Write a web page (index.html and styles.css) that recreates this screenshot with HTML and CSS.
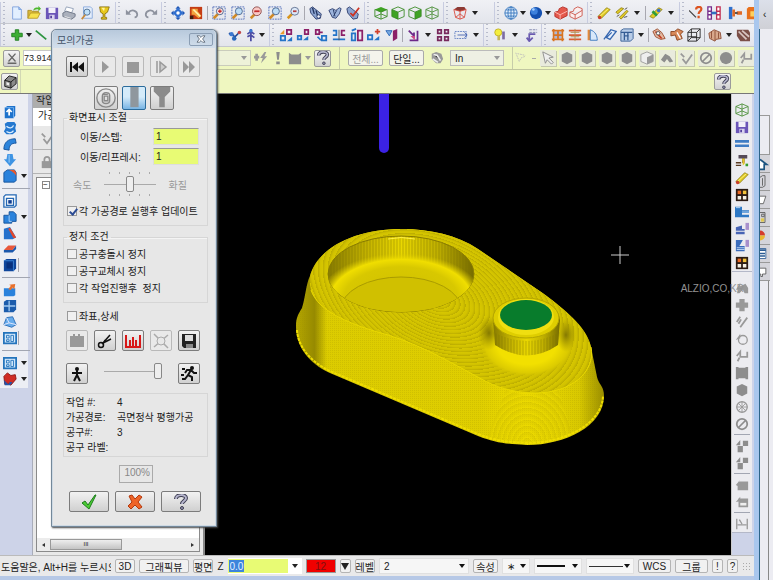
FILE: index.html
```html
<!DOCTYPE html>
<html lang="ko">
<head>
  <meta charset="UTF-8">
  <title>모의가공</title>
  <link rel="stylesheet" href="styles.css">
</head>
<body>

<!-- icon set -->
<svg class="sprite" aria-hidden="true">
  <symbol id="new" viewBox="0 0 16 16"><path d="M3 1h7l3 3v11H3z" fill="#e2efff" stroke="#7da0dc"/><path d="M10 1v3h3" fill="#9cc0f2" stroke="#7da0dc"/></symbol>
  <symbol id="open" viewBox="0 0 16 16"><path d="M1 14V5h4l1 1h7v3" fill="#d9b83c" stroke="#a98a20"/><path d="M1 14l3-6h11l-3 6z" fill="#f6e04c" stroke="#b99a26"/><path d="M7 5c1-3 3-4 6-3V0l3 3-3 3V4c-2-1-4 0-6 1z" fill="#4cb82c"/></symbol>
  <symbol id="save" viewBox="0 0 16 16"><path d="M1 2h14v13H1z" fill="#6b55b8"/><path d="M4 2h8v6H4z" fill="#f2f0fa"/><path d="M5 10h6v5H5z" fill="#d8d2ee"/><path d="M6 11h2v3H6z" fill="#54409c"/></symbol>
  <symbol id="print" viewBox="0 0 16 16"><path d="M5 1l8 2-2 5-8-2z" fill="#fff" stroke="#8d9bb4"/><path d="M1 8l4-2 10 3v3l-4 3-10-3z" fill="#aab0bc" stroke="#6c7484"/><path d="M3 12l7 2" stroke="#eee"/></symbol>
  <symbol id="preview" viewBox="0 0 16 16"><path d="M4 1h8l2 2v11H4z" fill="#e4eefc" stroke="#86a8dc"/><circle cx="8" cy="7" r="3.5" fill="#bfe0f8" stroke="#48688c"/><path d="M6 10l-4 5" stroke="#c78a3a" stroke-width="2"/></symbol>
  <symbol id="cup" viewBox="0 0 16 16"><path d="M3 1h11l-2 6-3 2v4h2v2H5v-2h2V9L4 7z" fill="#e8c81c" stroke="#8c7410"/><path d="M5 2h4L8 6z" fill="#fff3a0"/></symbol>
  <symbol id="undo" viewBox="0 0 16 16"><path d="M4 8c3-5 10-3 10 2 0 1-1 3-3 3" fill="none" stroke="#8d929e" stroke-width="2"/><path d="M1 4v6h6z" fill="#8d929e"/></symbol>
  <symbol id="redo" viewBox="0 0 16 16"><path d="M12 8C9 3 2 5 2 10c0 1 1 3 3 3" fill="none" stroke="#8d929e" stroke-width="2"/><path d="M15 4v6H9z" fill="#8d929e"/></symbol>
  <symbol id="pan" viewBox="0 0 16 16"><path d="M8 0l3 3H5zM8 16l3-3H5zM0 8l3-3v6zM16 8l-3-3v6z" fill="#1f56b4"/><path d="M8 2l6 6-6 6-6-6z" fill="#2f6fd0"/><circle cx="8" cy="8" r="2" fill="#fff"/></symbol>
  <symbol id="exit" viewBox="0 0 16 16"><path d="M1 1h14v14H1z" fill="#c43c14"/><path d="M3 3h7v3l4 5-3 3-5-4H3z" fill="#f2a43c"/><path d="M5 4l8 8" stroke="#fff3b0" stroke-width="2"/><path d="M1 11h4v4H1z" fill="#3c2010"/></symbol>
  <symbol id="zwin" viewBox="0 0 16 16"><path d="M1 1h14v14H1z" fill="none" stroke="#4a68b8" stroke-dasharray="2 1"/><path d="M7 9l-5 5" stroke="#d08a28" stroke-width="3"/><circle cx="9" cy="6" r="4" fill="#f4e0e0" stroke="#44608c"/><path d="M7 6h4M9 4v4" stroke="#c42a2a" stroke-width="1.5"/></symbol>
  <symbol id="zsel" viewBox="0 0 16 16"><path d="M1 1h14v14H1z" fill="none" stroke="#4a68b8" stroke-dasharray="2 1"/><path d="M7 9l-5 5" stroke="#d08a28" stroke-width="3"/><circle cx="9" cy="6" r="4" fill="#bcdcf6" stroke="#44608c"/></symbol>
  <symbol id="zout" viewBox="0 0 16 16"><path d="M7 9l-5 5" stroke="#d08a28" stroke-width="3"/><circle cx="9" cy="6" r="5" fill="#f8c8c4" stroke="#8a4444"/><path d="M6 6h6" stroke="#c42a2a" stroke-width="2"/></symbol>
  <symbol id="zin" viewBox="0 0 16 16"><path d="M7 9l-5 5" stroke="#d8941c" stroke-width="3"/><circle cx="10" cy="6" r="4.5" fill="#dce8f8" stroke="#5c6c8c"/><path d="M8 6h4" stroke="#b43c3c" stroke-width="2"/></symbol>
  <symbol id="screw" viewBox="0 0 16 16"><path d="M1 3l3-2 10 8-1 5-5 1-6-7z" fill="#8ca4d0" stroke="#2c3c6c"/><path d="M4 2l2 7M8 5l2 7" stroke="#22345f" stroke-width="1.5"/><circle cx="11" cy="12" r="2" fill="#f0f4fc" stroke="#2c3c6c"/></symbol>
  <symbol id="screw2" viewBox="0 0 16 16"><path d="M1 5l4-2 4 2 4-3 2 1-2 6-4 5-4-1z" fill="#9cb4dc" stroke="#2c3c6c"/><path d="M6 4l2 8M10 5l-4 7" stroke="#22345f"/></symbol>
  <symbol id="screw3" viewBox="0 0 16 16"><path d="M1 3l3-2 10 8-1 5-5 1-6-7z" fill="#8ca4d0" stroke="#2c3c6c"/><path d="M5 8l3 3 7-9" fill="none" stroke="#cc3424" stroke-width="2"/></symbol>
  <symbol id="cubetop" viewBox="0 0 16 16"><path d="M1 4l7-3 7 3-7 3z" fill="#3fa324"/><path d="M1 4v8l7 3 7-3V4M8 7v8M1 4l7 3 7-3M1 12l7-3 7 3" fill="none" stroke="#3a8a26"/></symbol>
  <symbol id="cubefront" viewBox="0 0 16 16"><path d="M1 4l7 3v8l-7-3z" fill="#3fa324"/><path d="M1 4l7-3 7 3v8l-7 3-7-3zM1 4l7 3 7-3M8 7v8" fill="none" stroke="#3a8a26"/></symbol>
  <symbol id="cuberight" viewBox="0 0 16 16"><path d="M15 4L8 7v8l7-3z" fill="#3fa324"/><path d="M1 4l7-3 7 3v8l-7 3-7-3zM1 4l7 3 7-3M8 7v8" fill="none" stroke="#3a8a26"/></symbol>
  <symbol id="cubewire" viewBox="0 0 16 16"><path d="M1 4l7-3 7 3v8l-7 3-7-3zM1 4l7 3 7-3M8 1v14M1 12l7-3 7 3" fill="none" stroke="#4b8f38"/></symbol>
  <symbol id="cubered" viewBox="0 0 16 16"><path d="M1 4l4-3h8l2 3-7 2z" fill="#8c3a34"/><path d="M1 4l2 9 5 2 5-2 2-9-7 2zM8 6v9M3 13l5-4 5 4" fill="none" stroke="#d8483c"/></symbol>
  <symbol id="globe" viewBox="0 0 16 16"><circle cx="8" cy="8" r="7" fill="#e2effc" stroke="#3474bc"/><path d="M1 8h14M8 1v14M2 4.500h12M2 11.500h12" stroke="#3474bc"/><ellipse cx="8" cy="8" rx="3.500" ry="7" fill="none" stroke="#3474bc"/></symbol>
  <symbol id="sphere" viewBox="0 0 16 16"><circle cx="8" cy="8" r="7" fill="#1450b0"/><circle cx="6" cy="6" r="4" fill="#3c80dc"/><circle cx="5" cy="4" r="1.500" fill="#a8d0ff"/></symbol>
  <symbol id="solid" viewBox="0 0 16 16"><path d="M1 7l4-1 1-3 4-2 5 2v8l-8 4-6-3z" fill="#e4584c" stroke="#b42c24"/><path d="M1 7l6 3 8-4M7 10v5" stroke="#ffc0b8" fill="none"/></symbol>
  <symbol id="wire" viewBox="0 0 16 16"><path d="M1 7l4-1 1-3 4-2 5 2v8l-8 4-6-3zM1 7l6 3 8-5M7 10v5" fill="#fbeeee" stroke="#cc5448"/></symbol>
  <symbol id="pencil" viewBox="0 0 16 16"><path d="M1 12L11 2l4 2L5 14z" fill="#e2cc24" stroke="#94821a"/><path d="M3 12L13 3" stroke="#fff48c"/><circle cx="3" cy="13" r="2" fill="#c8402c"/></symbol>
  <symbol id="pencils" viewBox="0 0 16 16"><path d="M1 7l6-5 3 1-7 6zM5 13l8-8 2 1-8 9z" fill="#e2cc24" stroke="#94821a"/><path d="M2 12l3-2M10 13l4-1M11 4l3-2" stroke="#444"/></symbol>
  <symbol id="pencilg" viewBox="0 0 16 16"><path d="M1 12L11 2l4 2L5 14z" fill="#e2cc24" stroke="#94821a"/><path d="M4 6l5 5" stroke="#2e9c3c" stroke-width="3"/><circle cx="11" cy="5" r="2" fill="#3470cc"/></symbol>
  <symbol id="ask" viewBox="0 0 16 16"><path d="M0 5l8 8" stroke="#444" stroke-width="1.500"/><path d="M8 4c0-4 7-4 6 0 0 2-3 2-3 5M11 11v3" fill="none" stroke="#dc5420" stroke-width="2.500"/></symbol>
  <symbol id="chain" viewBox="0 0 16 16"><path d="M1 1h4v14H1zM1 6h4M1 10h4" fill="#fff" stroke="#742c8c" stroke-width="1.500"/><path d="M11 1h4v14h-4zM11 6h4M11 10h4" fill="#fff" stroke="#c02c50" stroke-width="1.500"/><path d="M5 8h6" stroke="#3070c0" stroke-width="3"/></symbol>
  <symbol id="link" viewBox="0 0 16 16"><path d="M1 1h4v14H1z" fill="#3070cc"/><path d="M5 4h3v8H5zM10 6h6v4h-6z" fill="#e06a28"/><path d="M8 8h3" stroke="#444" stroke-width="2"/></symbol>
  <symbol id="orange" viewBox="0 0 16 16"><path d="M1 3l2-2h12v14H1z" fill="#e8701c"/><path d="M5 6h8v6H5z" fill="#fbd060"/></symbol>
  <symbol id="plus" viewBox="0 0 16 16"><path d="M6 2h4v4h4v4h-4v4H6v-4H2V6h4z" fill="#3cae34" stroke="#1d7c1c"/></symbol>
  <symbol id="line" viewBox="0 0 16 16"><path d="M2 3l12 10" stroke="#2c9440" stroke-width="2"/></symbol>
  <symbol id="node" viewBox="0 0 16 16"><path d="M1 6l6 3M6 12l8-8M7 9l2 4" stroke="#234a94" stroke-width="2"/><circle cx="4" cy="7" r="2.500" fill="#3c78d0"/><circle cx="13" cy="5" r="2" fill="#c44848"/><circle cx="7" cy="12" r="2.500" fill="#2868bc"/></symbol>
  <symbol id="pin" viewBox="0 0 16 16"><path d="M9 1v14M5 7l4-3 4 3M5 10l4-2 4 3" fill="none" stroke="#4b4ca4" stroke-width="2"/><circle cx="9" cy="3" r="2" fill="#3c78d0"/></symbol>
  <symbol id="xf1" viewBox="0 0 16 16"><path d="M9 2h5v5H9z" fill="none" stroke="#8c2068" stroke-width="2"/><path d="M2 9h5v5H2z" fill="none" stroke="#2474c8" stroke-width="2"/><path d="M1 7l5-5v5z" fill="#ea9a2c"/><path d="M9 15l6-5v5z" fill="#2474c8"/></symbol>
  <symbol id="xf2" viewBox="0 0 16 16"><path d="M10 2h4v5h-4z" fill="none" stroke="#8c2068" stroke-width="2"/><path d="M2 9h4v4H2z" fill="none" stroke="#2474c8" stroke-width="2"/><path d="M8 14h6V9z" fill="#2474c8"/></symbol>
  <symbol id="xf3" viewBox="0 0 16 16"><path d="M2 2h4v5H2zM5 5h5" fill="none" stroke="#8c2068" stroke-width="2"/><path d="M9 9h5v5H9zM4 10l4 4" fill="none" stroke="#2474c8" stroke-width="2"/></symbol>
  <symbol id="xf4" viewBox="0 0 16 16"><path d="M1 3h4v5H1M1 13h14" fill="none" stroke="#2474c8" stroke-width="2"/><path d="M15 3h-4v5h4" fill="none" stroke="#8c2068" stroke-width="2"/><path d="M8 2v12" stroke="#555"/></symbol>
  <symbol id="xf5" viewBox="0 0 16 16"><path d="M2 6h4v8H2zM2 3l5-2" fill="none" stroke="#2474c8" stroke-width="2"/><path d="M9 3h5v11H9z" fill="none" stroke="#8c2068" stroke-width="2"/></symbol>
  <symbol id="xf6" viewBox="0 0 16 16"><path d="M1 8h5v5H1z" fill="none" stroke="#2474c8" stroke-width="2"/><path d="M12 1v6M9 4h6" stroke="#d0402c" stroke-width="2"/><path d="M8 14h6V9z" fill="#2474c8"/></symbol>
  <symbol id="xf7" viewBox="0 0 16 16"><path d="M9 3l5-2v11l-5 3z" fill="#8c2068"/><path d="M1 3h7l-3 6z" fill="#78a8e0" stroke="#2c68b8"/></symbol>
  <symbol id="xf8" viewBox="0 0 16 16"><path d="M2 3l6 6V5M3 14h9V3" fill="none" stroke="#6c2888" stroke-width="2"/><path d="M4 9h5v5z" fill="#d04888"/></symbol>
  <symbol id="grid4" viewBox="0 0 16 16"><path d="M2 2h4v4H2zM10 2h4v4h-4zM2 10h4v4H2zM10 10h4v4h-4z" fill="none" stroke="#78285c" stroke-width="2"/></symbol>
  <symbol id="stretch" viewBox="0 0 16 16"><path d="M1 4h13v8H1z" fill="none" stroke="#5c7cc0" stroke-dasharray="2 1"/><path d="M4 8h11M12 5l3 3-3 3" fill="none" stroke="#4460b0"/></symbol>
  <symbol id="bulb" viewBox="0 0 16 16"><circle cx="6" cy="5" r="4" fill="#f4ee3c" stroke="#c0b020"/><path d="M5 9h3v5H5z" fill="#c8b858"/><path d="M12 4v9" stroke="#7c6ca4" stroke-width="3"/></symbol>
  <symbol id="dim" viewBox="0 0 16 16"><path d="M6 2h9M6 5h9" stroke="#777fa8" stroke-dasharray="3 1"/><path d="M13 7H6v7M3 11l3 4 4-4" fill="none" stroke="#6a5ab0" stroke-width="2"/></symbol>
  <symbol id="s1" viewBox="0 0 16 16"><path d="M4 4h8v8H4z" fill="#a8b8dc"/><path d="M3 1v14M13 1v14M1 3h14M1 13h14M8 3v10M3 8h10" stroke="#d87424" stroke-width="2"/></symbol>
  <symbol id="s2" viewBox="0 0 16 16"><path d="M1 3h14M1 8h14M1 13h14" stroke="#d85c34" stroke-width="2"/><path d="M3 5h10M3 10h10M8 1v14" stroke="#b09050"/></symbol>
  <symbol id="s3" viewBox="0 0 16 16"><path d="M3 2v12h3V2z" fill="#e48a3c"/><path d="M6 2c6 2 8 7 8 12H6z" fill="#d8e8fa" stroke="#3474bc"/></symbol>
  <symbol id="s4" viewBox="0 0 16 16"><path d="M1 13l8-11 6 2-7 9-4-2 6-6" fill="#e8f0fc" stroke="#3868b0" stroke-width="1.500"/></symbol>
  <symbol id="s5" viewBox="0 0 16 16"><path d="M1 3l3-2h11v11l-3 3H1z" fill="#b8cce8" stroke="#345c94"/><path d="M1 5h13M5 5v9M9 5v9M5 9h5" stroke="#345c94" stroke-width="1.500"/></symbol>
  <symbol id="s6" viewBox="0 0 16 16"><path d="M1 4l5-3 5 4 4 7-5 1-6-3z" fill="#e4b8a0" stroke="#984828"/><path d="M4 4l7 8" stroke="#c43c20" stroke-width="2"/><circle cx="7" cy="6" r="2" fill="#fff" stroke="#555"/></symbol>
  <symbol id="s7" viewBox="0 0 16 16"><path d="M1 4h4l4-3 6 3-3 3 2 5-6 2-2-6-5 1z" fill="#d88858" stroke="#86401c"/><path d="M8 5l4 7" stroke="#fff" stroke-width="1.500"/></symbol>
  <symbol id="cubeblk" viewBox="0 0 16 16"><path d="M1 5l4-4h10v10l-4 4H1zM1 5h10v10M11 5l4-4M5 1v10M5 11h10M1 15l4-4M1 10h10" fill="none" stroke="#222"/></symbol>
  <symbol id="mesh" viewBox="0 0 16 16"><path d="M1 6l6-4 7 3 1 7-6 1-1 2-6-3z" fill="#d8a88c" stroke="#8c4c34"/><path d="M4 4v8M8 3v11M12 5v7" stroke="#8c4c34"/></symbol>
  <symbol id="hatch" viewBox="0 0 16 16"><path d="M1 2h13l2 3v10H5L1 9z" fill="#7c5048"/><path d="M3 4l9 9M7 3l8 7" stroke="#d8c4c0" stroke-width="2"/></symbol>
  <symbol id="g-x" viewBox="0 0 16 16"><path d="M4 3l8 9M12 3l-8 9M3 14h10" stroke="#666" stroke-width="1.500"/></symbol>
  <symbol id="g-bolt" viewBox="0 0 16 16"><path d="M3 3v8M0 7h6" stroke="#999" stroke-width="3"/><path d="M12 1L7 8h3l-2 6 7-8h-3l2-5z" fill="#999"/></symbol>
  <symbol id="g-bang" viewBox="0 0 16 16"><path d="M6 1h4L9 10H7zM6 12h4v3H6z" fill="#8d8d8d"/></symbol>
  <symbol id="g-cat" viewBox="0 0 16 16"><path d="M1 2l3 2h8l3-2v13H1z" fill="#8d8d8d"/></symbol>
  <symbol id="help" viewBox="0 0 16 16"><path d="M3 5c0-5 10-5 10-1 0 3-4 3-4 6" fill="none" stroke="#3c3c50" stroke-width="4"/><path d="M3 5c0-5 10-5 10-1 0 3-4 3-4 6" fill="none" stroke="#b4b4cc" stroke-width="2"/><circle cx="9" cy="14" r="1.500" fill="#9494b0" stroke="#3c3c50"/></symbol>
  <symbol id="g-ball" viewBox="0 0 16 16"><path d="M2 3l5-2 6 2 2 6-3 5H7L2 9z" fill="#999"/><path d="M4 4l4 1 4 6M3 9l6 4" stroke="#eee" stroke-width="2"/></symbol>
  <symbol id="g-dots" viewBox="0 0 16 16"><path d="M2 2l4 10 2-4 5-2M4 3l9 2" fill="none" stroke="#bbb" stroke-dasharray="2 1"/></symbol>
  <symbol id="g-arrow" viewBox="0 0 16 16"><path d="M2 1l12 6-5 1 5 5-2 2-5-5-2 4z" fill="#eee" stroke="#888"/></symbol>
  <symbol id="g-hex" viewBox="0 0 16 16"><path d="M8 1l6 3v8l-6 3-6-3V4z" fill="#8d8d8d"/></symbol>
  <symbol id="g-part" viewBox="0 0 16 16"><path d="M1 4l7-3 7 3v8l-7 3-7-3z" fill="#eee" stroke="#999"/><path d="M8 7l7-3v8l-7 3z" fill="#999"/></symbol>
  <symbol id="g-bend" viewBox="0 0 16 16"><path d="M1 10l5-7 5 3 4 6-4 1-3-4-3 4z" fill="#8d8d8d"/></symbol>
  <symbol id="g-check" viewBox="0 0 16 16"><path d="M2 3l4 4M4 9l4 5 7-10" fill="none" stroke="#999" stroke-width="2"/></symbol>
  <symbol id="g-no" viewBox="0 0 16 16"><circle cx="8" cy="8" r="6" fill="none" stroke="#8d8d8d" stroke-width="2"/><path d="M4 12l8-8" stroke="#8d8d8d" stroke-width="2"/></symbol>
  <symbol id="g-disc" viewBox="0 0 16 16"><circle cx="8" cy="8" r="7" fill="#8d8d8d"/></symbol>
  <symbol id="g-hook" viewBox="0 0 16 16"><path d="M2 8l4-5v6l8 0V3M3 14l2-4" fill="none" stroke="#999" stroke-width="2"/></symbol>
  <symbol id="g-curve" viewBox="0 0 16 16"><path d="M1 10l5-8v4l6-3 3 5v6h-4l-2-4-4 4H2l2-4z" fill="#999"/></symbol>
  <symbol id="g-plus" viewBox="0 0 16 16"><path d="M5 1h6v4h4v6h-4v4H5v-4H1V5h4z" fill="#999"/></symbol>
  <symbol id="g-slash" viewBox="0 0 16 16"><path d="M2 8l4-6M4 10l3-5M6 14l8-11" stroke="#999" stroke-width="2"/></symbol>
  <symbol id="g-ring" viewBox="0 0 16 16"><circle cx="9" cy="9" r="5" fill="none" stroke="#999" stroke-width="1.500"/><path d="M1 9l5-7v5z" fill="#999"/></symbol>
  <symbol id="g-block" viewBox="0 0 16 16"><path d="M1 1h3v1h8V1h3v14h-3v-1H4v1H1z" fill="#8d8d8d"/></symbol>
  <symbol id="g-globe" viewBox="0 0 16 16"><circle cx="8" cy="8" r="6" fill="none" stroke="#999" stroke-width="1.500"/><path d="M2 8h12M8 2v12M4 4l8 8M12 4l-8 8" stroke="#999"/></symbol>
  <symbol id="g-copy" viewBox="0 0 16 16"><path d="M9 2h6v6H9zM3 8h6v7H3zM1 7l5-6v6z" fill="#8d8d8d"/></symbol>
  <symbol id="g-card" viewBox="0 0 16 16"><path d="M4 4h11v10H3V9L1 8l5-6z" fill="#999"/></symbol>
  <symbol id="g-card2" viewBox="0 0 16 16"><path d="M4 4h11v10H4z" fill="#999"/><path d="M6 9h7v3H6z" fill="#eee"/><path d="M1 8l5-6v5z" fill="#999"/></symbol>
  <symbol id="g-dim" viewBox="0 0 16 16"><path d="M2 2v12M14 2v12M3 9h10M5 3l3 5" stroke="#999" stroke-width="1.500"/></symbol>
  <symbol id="g-lock" viewBox="0 0 16 16"><path d="M5 8V5c0-4 6-4 6 0v3" fill="none" stroke="#999" stroke-width="2"/><path d="M2 7h12v8H2z" fill="#999"/></symbol>
  <symbol id="cube" viewBox="0 0 16 16"><path d="M2 6l5-5 8 2v7l-6 5-7-2z" fill="#8a8a8a" stroke="#111"/><path d="M2 6l7 2 6-5M9 8v7" fill="none" stroke="#111"/><path d="M4 8l3 1v3l-3-1z" fill="#eee"/></symbol>
  <symbol id="b-up" viewBox="0 0 16 16"><path d="M2 3l3-2h9v11l-2 3H2z" fill="#1d72cc"/><path d="M2 3h10v12" fill="none" stroke="#78b4f0"/><path d="M7 12V6M4 8l3-3 3 3" fill="none" stroke="#fff" stroke-width="2"/></symbol>
  <symbol id="b-rev" viewBox="0 0 16 16"><path d="M2 3l3-2h8l2 3-1 4 1 4-4 3H4l-3-3 2-4z" fill="#2478d0"/><path d="M4 6c3 3 7 2 8-1M4 12c3 2 6 2 8-1" fill="none" stroke="#d8ecff" stroke-width="1.500"/></symbol>
  <symbol id="b-arc" viewBox="0 0 16 16"><path d="M1 14c0-8 5-12 13-12l1 5c-6 0-8 3-8 8z" fill="#2c84dc" stroke="#145098"/></symbol>
  <symbol id="b-down" viewBox="0 0 16 16"><path d="M5 1h6l1 6h3l-7 8-7-8h3z" fill="#3e94e4"/><path d="M7 2v9" stroke="#a8d4fa"/></symbol>
  <symbol id="b-box" viewBox="0 0 16 16"><path d="M1 4l4-3h8l2 3v9l-2 2H1z" fill="#2a82dc" stroke="#145098"/><path d="M7 1h6l2 3v4c-1-3-4-5-8-7z" fill="#e8582c"/></symbol>
  <symbol id="b-shell" viewBox="0 0 16 16"><path d="M1 3l2-2h12v12l-2 2H1z" fill="#fff" stroke="#2468b4" stroke-width="1.500"/><path d="M4 5h8v8H4z" fill="#fff" stroke="#2468b4" stroke-width="1.500"/><path d="M6 7h4v4H6z" fill="#0e3c90"/></symbol>
  <symbol id="b-bool" viewBox="0 0 16 16"><path d="M1 6h6V2h5l3 3v8h-5v2H1z" fill="#2a82dc" stroke="#145098"/><path d="M7 6v7h3" fill="none" stroke="#b0d8fa"/></symbol>
  <symbol id="b-cut" viewBox="0 0 16 16"><path d="M1 3l7-2 7 12-4 2H1z" fill="#2470cc"/><path d="M8 2l7 11-3 1L6 3z" fill="#e4482c"/></symbol>
  <symbol id="b-slab" viewBox="0 0 16 16"><path d="M1 9l5-5h9l-4 5z" fill="#e8583c"/><path d="M1 9h10l4-5v4l-4 4H1z" fill="#1c58ac"/></symbol>
  <symbol id="b-dark" viewBox="0 0 16 16"><path d="M1 3l3-2h11v11l-3 3H1z" fill="#0f469c"/><path d="M4 5h7v7H4z" fill="#08307c"/><path d="M1 3h11v12" fill="none" stroke="#3c80d0"/></symbol>
  <symbol id="b-add" viewBox="0 0 16 16"><path d="M1 6h13v8l-2 1H1z" fill="#2a82dc"/><path d="M6 7l3-4-2-1 7-1-1 6-2-2-2 3z" fill="#e8702c"/></symbol>
  <symbol id="b-grid" viewBox="0 0 16 16"><path d="M1 3l3-2h11v11l-3 3H1z" fill="#1c5cac"/><path d="M7 2v12M1 8h13" stroke="#a0c8f0" stroke-width="1.500"/></symbol>
  <symbol id="b-poly" viewBox="0 0 16 16"><path d="M4 3l7-1 4 9-5 3-9-3z" fill="#68acec" stroke="#2468b4"/><path d="M4 3l3 6 8 2M7 9l-6 2" fill="none" stroke="#eef"/></symbol>
  <symbol id="b-view" viewBox="0 0 16 16"><path d="M1 2h14v12H1z" fill="#cfe6fa" stroke="#2474bc" stroke-width="2"/><path d="M4 5h3v3H4zM9 5h3v7H9zM4 10h3v2H4z" fill="none" stroke="#2474bc"/></symbol>
  <symbol id="b-red" viewBox="0 0 16 16"><path d="M1 5l4-4 4 3 5-1 1 5-6 7-4-2-3 1z" fill="#d02c24" stroke="#8c1410"/><path d="M1 9l5 5 2-3 3 1-3 3H2z" fill="#2454a8"/></symbol>
  <symbol id="eq" viewBox="0 0 16 16"><path d="M0 5h16M0 10h16" stroke="#3f7cc4" stroke-width="3"/></symbol>
  <symbol id="drill" viewBox="0 0 16 16"><path d="M4 1h10v4h-3v5H8V5H4z" fill="#554a58"/><path d="M8 5h3v6l-2 2z" fill="#e4c428"/><path d="M1 10h6M1 13h6" stroke="#5a3a20" stroke-width="1.500"/><path d="M12 11h3v3h-3z" fill="#38a02c"/></symbol>
  <symbol id="win" viewBox="0 0 16 16"><path d="M1 1h14v14H1z" fill="#2c1c14"/><path d="M3 3h4v4H3z" fill="#ec6a24"/><path d="M9 3h4v4H9z" fill="#f4c43c"/><path d="M3 9h4v4H3zM9 9h4v4H9z" fill="#f6f0e4"/></symbol>
  <symbol id="steps" viewBox="0 0 16 16"><path d="M0 2h8v4h8v3H8v2h8v3H0z" fill="#2e78c4"/><path d="M1 3h5M8 8h8" stroke="#c4e0fa"/></symbol>
  <symbol id="layers" viewBox="0 0 16 16"><path d="M1 6l7-2v4h3v2H1zM1 11h10v3H1z" fill="#4864b4"/><path d="M12 1h4v8h-4z" fill="#a890cc"/></symbol>
  <symbol id="pockets" viewBox="0 0 16 16"><path d="M1 1h8L5 8h6v6H1z" fill="#3a6cbc"/><path d="M2 10h9M2 12h9" stroke="#c4dcf6"/><path d="M12 1h4v8h-4z" fill="#a890cc"/></symbol>

  <symbol id="rew" viewBox="0 0 16 16"><path d="M1 3h2v10H1zM9 3v10L3 8zM15 3v10L9 8z" fill="#111"/></symbol>
  <symbol id="play" viewBox="0 0 16 16"><path d="M5 2l7 6-7 6z" fill="#999"/></symbol>
  <symbol id="stop" viewBox="0 0 16 16"><path d="M2 3h12v11H2z" fill="#999"/></symbol>
  <symbol id="step" viewBox="0 0 16 16"><path d="M4 2v12" stroke="#999" stroke-width="1.500"/><path d="M7 3l6 5-6 5z" fill="#ccc" stroke="#999" stroke-width="1.500"/></symbol>
  <symbol id="ff" viewBox="0 0 16 16"><path d="M2 2l6 6-6 6zM8 2l6 6-6 6z" fill="#999"/></symbol>
  <symbol id="spiral" viewBox="0 0 24 24"><circle cx="12" cy="12" r="10" fill="none" stroke="#888" stroke-width="1.500"/><path d="M8 10c0-5 8-5 8-1v6c0 4-8 4-8 0zM10 10h4v5h-4zM9 8h5" fill="none" stroke="#888" stroke-width="1.500"/></symbol>
  <symbol id="shank" viewBox="0 0 24 24"><path d="M8 0h9v22H8z" fill="#8f979e"/></symbol>
  <symbol id="holder" viewBox="0 0 24 24"><path d="M3 0h18v5l-6 6v11H9V11L3 5z" fill="#8b8b8b"/></symbol>
  <symbol id="box" viewBox="0 0 16 16"><path d="M1 3h3V1h2v2h3V1h2v2h4v11H1z" fill="#999"/></symbol>
  <symbol id="cutter" viewBox="0 0 16 16"><circle cx="4" cy="12" r="2.500" fill="none" stroke="#111" stroke-width="1.500"/><path d="M5 11l8-9M6 10l8-4M6 11l2-4" stroke="#111" stroke-width="1.500"/></symbol>
  <symbol id="ruler" viewBox="0 0 16 16"><path d="M1 2v12h14V2M5 7v6M8 4v9M11 7v6" fill="none" stroke="#d81818" stroke-width="2"/></symbol>
  <symbol id="cross" viewBox="0 0 16 16"><path d="M1 1l14 14M15 2L1 14" stroke="#aaa" stroke-width="1.500"/><circle cx="8" cy="8" r="4" fill="#e8e8e8" stroke="#aaa"/></symbol>
  <symbol id="disk" viewBox="0 0 16 16"><path d="M1 1h14v14H3l-2-2z" fill="#222"/><path d="M4 2h8v6H4z" fill="#ddd"/><path d="M5 11h7v4H5z" fill="#888"/></symbol>
  <symbol id="walk" viewBox="0 0 16 16"><circle cx="8" cy="3" r="2" fill="#111"/><path d="M8 4v6M3 7h10M5 15l3-6 3 6" fill="none" stroke="#111" stroke-width="2"/></symbol>
  <symbol id="run" viewBox="0 0 16 16"><circle cx="11" cy="2" r="2" fill="#111"/><path d="M10 4L7 9l4 2v4M7 9l-3 4H1M4 7l2-3h4l3 3h3M1 3h3M0 9h3" fill="none" stroke="#111" stroke-width="2"/></symbol>
  <symbol id="ok" viewBox="0 0 16 16"><path d="M1 9l3-2 3 4 7-10h1L8 15z" fill="#4ccc34" stroke="#1d7c1c"/></symbol>
  <symbol id="cancel" viewBox="0 0 16 16"><path d="M2 2l3-1 3 4 4-4 3 2-4 5 4 5-3 2-4-4-4 4-3-3 4-4z" fill="#ee6428" stroke="#b4380c"/></symbol>
</svg>

<div class="app">
  <div class="bar bar-top">
    <div class="group">
      <button title="New"><svg><use href="#new"/></svg></button>
      <button title="Open"><svg><use href="#open"/></svg></button>
      <button title="Save"><svg><use href="#save"/></svg></button>
      <button title="Print"><svg><use href="#print"/></svg></button>
      <button title="Preview"><svg><use href="#preview"/></svg></button>
      <button title="Machine"><svg><use href="#cup"/></svg></button>
    </div>
    <div class="group">
      <button title="Undo"><svg><use href="#undo"/></svg></button>
      <button title="Redo"><svg><use href="#redo"/></svg></button>
    </div>
    <div class="group">
      <button title="Pan"><svg><use href="#pan"/></svg></button>
      <button title="Repaint"><svg><use href="#exit"/></svg></button>
      <i class="sep"></i>
      <button title="Zoom window"><svg><use href="#zwin"/></svg></button>
      <button title="Zoom target"><svg><use href="#zsel"/></svg></button>
      <button title="Unzoom"><svg><use href="#zout"/></svg></button>
      <button title="Zoom selected"><svg><use href="#zsel"/></svg></button>
      <button title="Unzoom 0.8"><svg><use href="#zin"/></svg></button>
      <i class="sep"></i>
      <button title="Rotate"><svg><use href="#screw"/></svg></button>
      <button title="Named view"><svg><use href="#screw2"/></svg></button>
      <button title="Previous view"><svg><use href="#screw3"/></svg></button>
    </div>
    <div class="group">
      <button title="Top view"><svg><use href="#cubetop"/></svg></button>
      <button title="Front view"><svg><use href="#cubefront"/></svg></button>
      <button title="Right view"><svg><use href="#cuberight"/></svg></button>
      <button title="Isometric view"><svg><use href="#cubewire"/></svg></button>
    </div>
    <div class="group group-start">
      <button title="Planes"><svg><use href="#cubered"/></svg></button>
      <button class="more" title="More planes"></button>
    </div>
    <div class="group">
      <button title="Wireframe"><svg><use href="#globe"/></svg></button>
      <button class="more" title="More wireframe"></button>
      <button title="Shaded"><svg><use href="#sphere"/></svg></button>
      <button class="more" title="More shading"></button>
      <button title="Solid"><svg><use href="#solid"/></svg></button>
      <button title="Outline"><svg><use href="#wire"/></svg></button>
    </div>
    <div class="group">
      <button title="Delete"><svg><use href="#pencil"/></svg></button>
      <button title="Delete duplicates"><svg><use href="#pencils"/></svg></button>
      <button class="more" title="More delete"></button>
      <i class="sep"></i>
      <button title="Undelete"><svg><use href="#pencilg"/></svg></button>
      <button class="more" title="More undelete"></button>
    </div>
    <div class="group group-start">
      <button title="Analyze"><svg><use href="#ask"/></svg></button>
      <button title="Chain"><svg><use href="#chain"/></svg></button>
      <i class="sep"></i>
      <button title="Link"><svg><use href="#link"/></svg></button>
      <button title="Settings"><svg><use href="#orange"/></svg></button>
    </div>
  </div>

  <div class="bar bar-draw">
    <div class="group">
      <button title="Point"><svg><use href="#plus"/></svg></button>
      <button class="more" title="More points"></button>
      <button title="Line"><svg><use href="#line"/></svg></button>
      <i class="fill"></i>
      <button title="Trim"><svg><use href="#node"/></svg></button>
      <button title="Break"><svg><use href="#pin"/></svg></button>
      <button class="more" title="More breaks"></button>
    </div>
    <div class="group">
      <button title="Translate"><svg><use href="#xf1"/></svg></button>
      <button title="Translate 3D"><svg><use href="#xf2"/></svg></button>
      <button title="Rotate"><svg><use href="#xf3"/></svg></button>
      <button title="Mirror"><svg><use href="#xf4"/></svg></button>
      <button title="Scale"><svg><use href="#xf5"/></svg></button>
      <button title="Move to origin"><svg><use href="#xf6"/></svg></button>
      <button title="Project"><svg><use href="#xf7"/></svg></button>
      <i class="sep"></i>
      <button title="Offset"><svg><use href="#xf8"/></svg></button>
      <button class="more" title="More offset"></button>
      <button title="Array"><svg><use href="#grid4"/></svg></button>
      <button title="Stretch"><svg><use href="#stretch"/></svg></button>
      <button class="more" title="More stretch"></button>
    </div>
    <div class="group">
      <button title="Light"><svg><use href="#bulb"/></svg></button>
      <button class="more" title="More light"></button>
      <button title="Dimension"><svg><use href="#dim"/></svg></button>
    </div>
    <div class="group">
      <button title="Net surface"><svg><use href="#s1"/></svg></button>
      <button title="Ruled surface"><svg><use href="#s2"/></svg></button>
      <button title="Revolved surface"><svg><use href="#s3"/></svg></button>
      <button title="Swept surface"><svg><use href="#s4"/></svg></button>
      <button title="Fence surface"><svg><use href="#s5"/></svg></button>
      <button class="more" title="More surfaces"></button>
      <i class="sep"></i>
      <button title="Trim surface"><svg><use href="#s6"/></svg></button>
      <button title="Fillet surface"><svg><use href="#s7"/></svg></button>
      <button title="Block"><svg><use href="#cubeblk"/></svg></button>
      <i class="sep"></i>
      <button title="Mesh"><svg><use href="#mesh"/></svg></button>
      <button class="more" title="More mesh"></button>
      <button title="Hatch"><svg><use href="#hatch"/></svg></button>
    </div>
  </div>

  <div class="bar bar-input">
    <div class="cell">
      <button class="key" title="X"><svg><use href="#g-x"/></svg></button>
      <input class="coord" type="text" value="73.914" aria-label="X">
      <span class="drop drop-off"><select aria-label="Z" disabled><option></option></select></span>
      <button title="Fast point"><svg><use href="#g-bolt"/></svg></button>
      <button title="Autocursor"><svg><use href="#g-bang"/></svg></button>
      <button title="Cursor mode"><svg><use href="#g-cat"/></svg></button>
      <button class="more more-off" title="Cursor list"></button>
      <button class="key" title="Help"><svg><use href="#help"/></svg></button>
    </div>
    <div class="cell cell-select">
      <button class="word word-off">전체...</button>
      <button class="word">단일...</button>
      <button title="Selection"><svg><use href="#g-ball"/></svg></button>
      <span class="drop drop-off"><select aria-label="Selection mode"><option>In</option></select></span>
    </div>
    <div class="cell cell-tools">
      <button title="Polygon"><svg><use href="#g-dots"/></svg></button>
      <i class="dash"></i>
      <button class="flat" title="Select"><svg><use href="#g-arrow"/></svg></button>
      <button class="flat" title="Body"><svg><use href="#g-hex"/></svg></button>
      <button class="flat" title="Edge"><svg><use href="#g-hex"/></svg></button>
      <button class="flat" title="Face"><svg><use href="#g-hex"/></svg></button>
      <button class="flat" title="Solid"><svg><use href="#g-hex"/></svg></button>
      <button class="flat" title="Part"><svg><use href="#g-part"/></svg></button>
      <button class="flat" title="Back"><svg><use href="#g-bend"/></svg></button>
      <button class="flat" title="Verify"><svg><use href="#g-check"/></svg></button>
      <button class="flat" title="None"><svg><use href="#g-no"/></svg></button>
      <button class="flat" title="End"><svg><use href="#g-disc"/></svg></button>
      <button class="flat" title="Last"><svg><use href="#g-hook"/></svg></button>
    </div>
  </div>

  <div class="bar bar-ribbon">
    <button class="key" title="Model"><svg><use href="#cube"/></svg></button>
    <i class="sep"></i>
    <i class="fill"></i>
    <button class="key" title="Help"><svg><use href="#help"/></svg></button>
  </div>

  <div class="main">
    <div class="side side-left">
      <div class="pair"><button title="Extrude"><svg><use href="#b-up"/></svg></button></div>
      <div class="pair"><button title="Revolve"><svg><use href="#b-rev"/></svg></button></div>
      <div class="pair"><button title="Sweep"><svg><use href="#b-arc"/></svg></button></div>
      <div class="pair"><button title="Loft"><svg><use href="#b-down"/></svg></button></div>
      <div class="pair"><button title="Fillet"><svg><use href="#b-box"/></svg></button><button class="more" title="More fillet"></button></div>
      <hr>
      <div class="pair"><button title="Shell"><svg><use href="#b-shell"/></svg></button></div>
      <div class="pair"><button title="Boolean"><svg><use href="#b-bool"/></svg></button><button class="more" title="More boolean"></button></div>
      <div class="pair"><button title="Draft"><svg><use href="#b-cut"/></svg></button></div>
      <div class="pair"><button title="Trim"><svg><use href="#b-slab"/></svg></button></div>
      <div class="pair"><button title="Thicken"><svg><use href="#b-dark"/></svg></button><i class="sep"></i></div>
      <hr>
      <div class="pair"><button title="Find"><svg><use href="#b-add"/></svg></button></div>
      <div class="pair"><button title="Pattern"><svg><use href="#b-grid"/></svg></button></div>
      <div class="pair"><button title="Surface"><svg><use href="#b-poly"/></svg></button></div>
      <div class="pair"><button title="Layout"><svg><use href="#b-view"/></svg></button><i class="sep"></i></div>
      <hr>
      <div class="pair"><button title="Drafting"><svg><use href="#b-view"/></svg></button><button class="more" title="More drafting"></button></div>
      <div class="pair"><button title="Solid edit"><svg><use href="#b-red"/></svg></button><button class="more" title="More solid edit"></button></div>
    </div>

    <div class="manager">
      <h2>작업</h2>
      <div class="tab">가공</div>
      <div class="manager-tool"><svg><use href="#g-check"/></svg></div>
      <div class="manager-tool"><svg><use href="#g-lock"/></svg></div>
      <div class="tree">
        <span class="node">−</span>
        <div class="hscroll"><span class="left"></span><span class="thumb">III</span><span class="fill"></span><span class="right"></span></div>
      </div>
    </div>

    <div class="view">
      <svg viewBox="205 94 526 461" preserveAspectRatio="xMidYMid slice">
        <defs>
          <radialGradient id="rings" gradientUnits="userSpaceOnUse" cx="0" cy="0" r="4" spreadMethod="repeat" gradientTransform="translate(436 298) rotate(24) scale(1.3 .8)">
            <stop offset="0" stop-color="#d6c600"/><stop offset=".5" stop-color="#d2c200"/><stop offset="1" stop-color="#bcad00"/>
          </radialGradient>
          <radialGradient id="front" gradientUnits="userSpaceOnUse" cx="0" cy="0" r="5" spreadMethod="repeat" gradientTransform="translate(527 444) scale(1 1.2)">
            <stop offset="0" stop-color="#ecda00" stop-opacity=".5"/><stop offset="1" stop-color="#cdbc00" stop-opacity=".4"/>
          </radialGradient>
          <linearGradient id="side" gradientUnits="userSpaceOnUse" x1="296" y1="0" x2="604" y2="0">
            <stop offset="0" stop-color="#b5a700"/><stop offset=".06" stop-color="#968a00"/><stop offset=".1" stop-color="#dccc00"/><stop offset=".6" stop-color="#dfce00"/><stop offset=".75" stop-color="#eedc00"/><stop offset=".92" stop-color="#d8c800"/><stop offset="1" stop-color="#9a8e00"/>
          </linearGradient>
          <linearGradient id="wall" x1="0" x2="1" y1="0" y2="0">
            <stop offset="0" stop-color="#867a00"/><stop offset=".25" stop-color="#c1b000"/><stop offset=".5" stop-color="#ead800"/><stop offset=".75" stop-color="#c0b000"/><stop offset="1" stop-color="#766b00"/>
          </linearGradient>
          <radialGradient id="bowl" cx=".5" cy=".5" r=".5">
            <stop offset="0" stop-color="#cdbd00"/><stop offset=".7" stop-color="#d8c800"/><stop offset=".86" stop-color="#f0de00"/><stop offset="1" stop-color="#d8c700" stop-opacity="0"/>
          </radialGradient>
          <radialGradient id="skirt" cx=".5" cy=".5" r=".5">
            <stop offset=".6" stop-color="#f2e000"/><stop offset=".85" stop-color="#dccb00"/><stop offset="1" stop-color="#c9b900" stop-opacity="0"/>
          </radialGradient>
          <radialGradient id="shade" cx=".5" cy=".5" r=".5">
            <stop offset="0" stop-color="#6e6400" stop-opacity=".8"/><stop offset="1" stop-color="#8c8000" stop-opacity="0"/>
          </radialGradient>
          <pattern id="ribs" width="3" height="8" patternUnits="userSpaceOnUse"><path d="M1 0v8" stroke="#776c00" stroke-opacity=".4"/></pattern>
          <pattern id="grain" width="2" height="2" patternUnits="userSpaceOnUse"><path d="M0 0h1v1H0z" fill="#9c8e00" fill-opacity=".2"/></pattern>
          <clipPath id="pocket"><ellipse cx="401" cy="274" rx="73" ry="38"/></clipPath>
        </defs>
        <!-- tool -->
        <path d="M384 90v58" stroke="#3b22e4" stroke-width="10" stroke-linecap="round"/>
        <!-- body -->
        <path d="M302 308C306 294 306 284 310 276C318 247 356 229 402 229C430 229 457 235 478 249L544 294C566 311 586 327 591 347L597 377C599 385 604 386 604 396C604 426 565 445 527 445C507 444 496 443 478 436L330 373C308 363 296 346 296 326C296 317 299 313 302 308z" fill="url(#side)"/>
        <path d="M302 308C306 294 306 284 310 276L592 353L597 377C599 385 604 386 604 396C604 426 565 445 527 445C507 444 496 443 478 436L330 373C308 363 296 346 296 326C296 317 299 313 302 308z" fill="url(#grain)"/>
        <path d="M487 438L506 390Q530 400 558 388L572 434Q530 452 487 438z" fill="url(#front)"/>
        <path d="M297 330C298 346 309 361 330 371L478 434C496 441 507 442 527 443C565 443 602 424 603 396" fill="none" stroke="#f0de00" stroke-width="2" stroke-dasharray="3 1"/>
        <path d="M310 276C318 247 356 229 402 229C430 229 457 235 478 249L544 294C570 313 588 330 591 347C596 372 571 393 535 393C518 393 502 389 487 382C457 366 424 346 388 335C352 325 318 312 311 290Q309 283 310 276z" fill="url(#rings)"/>
        <path d="M311 290C318 312 352 325 388 335C424 346 457 366 487 382C502 389 518 393 535 393C571 393 596 372 591 347" fill="none" stroke="#e9d800"/>
        <!-- pocket -->
        <ellipse cx="401" cy="274" rx="73" ry="38" fill="url(#wall)" stroke="#8a7d00"/>
        <g clip-path="url(#pocket)">
          <path d="M328 236h146v40H328z" fill="url(#ribs)"/>
          <ellipse cx="401" cy="299" rx="82" ry="46" fill="url(#bowl)"/>
          <ellipse cx="401" cy="309" rx="60" ry="32" fill="#d0c000" stroke="#a99b00"/>
          <path d="M388 239Q401 236 415 239" fill="none" stroke="#fff04a"/>
        </g>
        <!-- boss -->
        <ellipse cx="527" cy="344" rx="49" ry="34" fill="url(#skirt)"/>
        <ellipse cx="489" cy="333" rx="11" ry="17" fill="url(#shade)"/>
        <ellipse cx="566" cy="335" rx="10" ry="17" fill="url(#shade)"/>
        <path d="M493 320Q495 300 526 299Q558 300 560 320L558 345Q527 366 495 345z" fill="url(#wall)"/>
        <path d="M493 332Q527 350 560 332L558 345Q527 366 495 345z" fill="url(#ribs)"/>
        <ellipse cx="526" cy="318" rx="33" ry="20" fill="#dfce00" stroke="#b5a600"/>
        <ellipse cx="526" cy="317" rx="28" ry="18" fill="#f0df10"/>
        <ellipse cx="526" cy="315" rx="26" ry="15" fill="#087c2c"/>
        <!-- cursor -->
        <path d="M611 255h18M620 246v18" stroke="#ccc"/>
      </svg>
    </div>

    <div class="side side-right">
      <div class="stack">
        <button title="View"><svg><use href="#cubewire"/></svg></button>
        <button title="Save"><svg><use href="#save"/></svg></button>
        <button title="Parallel"><svg><use href="#eq"/></svg></button>
        <button title="Drill"><svg><use href="#drill"/></svg></button>
        <button title="Delete"><svg><use href="#pencil"/></svg></button>
        <button title="Window"><svg><use href="#win"/></svg></button>
        <button title="Rough"><svg><use href="#steps"/></svg></button>
        <button title="Finish"><svg><use href="#layers"/></svg></button>
        <button title="Pocket"><svg><use href="#pockets"/></svg></button>
        <button title="Tile"><svg><use href="#win"/></svg></button>
      </div>
      <div class="stack">
        <button title="Curve"><svg><use href="#g-curve"/></svg></button>
        <button title="Add"><svg><use href="#g-plus"/></svg></button>
        <button title="Lines"><svg><use href="#g-slash"/></svg></button>
        <button title="Arc"><svg><use href="#g-ring"/></svg></button>
        <button title="Spline"><svg><use href="#g-hook"/></svg></button>
        <button title="Box"><svg><use href="#g-block"/></svg></button>
        <button title="Disc"><svg><use href="#g-hex"/></svg></button>
        <button title="Net"><svg><use href="#g-globe"/></svg></button>
        <button title="None"><svg><use href="#g-no"/></svg></button>
        <hr>
        <button title="Copy"><svg><use href="#g-copy"/></svg></button>
        <button title="Move"><svg><use href="#g-copy"/></svg></button>
        <hr>
        <button title="Level"><svg><use href="#g-card"/></svg></button>
        <button title="Group"><svg><use href="#g-card2"/></svg></button>
        <hr>
        <button title="Measure"><svg><use href="#g-dim"/></svg></button>
      </div>
    </div>
    <span class="mark">ALZIO,CO,KR</span>
  </div>

  <div class="status">
    <span class="hint">도움말은, Alt+H를 누르시오</span>
    <button class="cap">3D</button>
    <button class="cap cap-wide">그래픽뷰</button>
    <button class="cap">평면</button>
    <label for="depth">Z</label>
    <span class="depth"><input id="depth" type="text" value="0.0"><i class="tri"></i></span>
    <button class="colour">12</button>
    <button class="cap cap-tri" title="Colours"><i class="tri"></i></button>
    <button class="cap">레벨</button>
    <span class="drop level"><select aria-label="레벨"><option>2</option></select></span>
    <button class="cap cap-attr">속성</button>
    <span class="drop point"><select aria-label="Point style"><option>∗</option></select></span>
    <span class="drop stroke"><select class="thick" aria-label="Line width"><option></option></select></span>
    <span class="drop stroke"><select class="thin" aria-label="Line style"><option></option></select></span>
    <button class="cap cap-mid">WCS</button>
    <button class="cap cap-mid">그룹</button>
    <button class="cap cap-tiny">!</button>
    <button class="cap cap-tiny">?</button>
    <i class="size"></i>
  </div>
</div>

<!-- window behind -->
<div class="behind">
  <div class="behind-top">‹</div>
  <div class="behind-gap"></div>
  <div class="tabs">
    <i class="blank"></i>
    <svg viewBox="0 0 12 16"><path d="M0 3l8 6H5v6H0" fill="#fff" stroke="#1c5480" stroke-width="2"/></svg>
    <svg viewBox="0 0 12 16"><path d="M0 3l3-2h3v12l-3 2H0M3 4v9" fill="none" stroke="#555"/></svg>
    <svg viewBox="0 0 12 16"><path d="M0 4h7l-3 9H0" fill="#fff" stroke="#555"/></svg>
    <svg viewBox="0 0 12 16"><path d="M0 2h6v12H0M2 4h3v3H2z" fill="none" stroke="#555"/><path d="M1 9h4v4H1z" fill="#e0c850"/></svg>
    <svg viewBox="0 0 12 16"><path d="M0 2a6 6 0 0 1 6 6H0z" fill="#d43c2c"/><path d="M6 8a6 6 0 0 1-6 6V8z" fill="#e8b830"/></svg>
    <svg viewBox="0 0 12 16"><path d="M0 2h7v12H0" fill="#fff" stroke="#2c5c94"/><path d="M0 4h7M0 8h6M0 11h6" stroke="#2c5c94" stroke-width="2"/></svg>
    <svg viewBox="0 0 12 16"><path d="M0 4h7v7H3v3H1v-3H0" fill="#fff" stroke="#555"/></svg>
  </div>
  <div class="behind-body"></div>
</div>

<form class="dialog">
  <header>
    <h1>모의가공</h1>
    <button type="button" class="close" title="Close"><svg viewBox="0 0 12 10"><path d="M1 1h3l2 2 2-2h3L8 5l3 4H8L6 7 4 9H1l3-4z" fill="#fff" stroke="#53606e"/></svg></button>
  </header>

  <div class="row">
    <button type="button" class="btn" title="Rewind"><svg><use href="#rew"/></svg></button>
    <button type="button" class="btn btn-off" title="Play"><svg><use href="#play"/></svg></button>
    <button type="button" class="btn btn-off" title="Stop"><svg><use href="#stop"/></svg></button>
    <button type="button" class="btn btn-off" title="Step"><svg><use href="#step"/></svg></button>
    <button type="button" class="btn btn-off" title="Fast forward"><svg><use href="#ff"/></svg></button>
  </div>
  <div class="row row-mode">
    <button type="button" class="btn btn-mode" title="Path"><svg><use href="#spiral"/></svg></button>
    <button type="button" class="btn btn-mode btn-on" title="Tool"><svg><use href="#shank"/></svg></button>
    <button type="button" class="btn btn-mode" title="Holder"><svg><use href="#holder"/></svg></button>
  </div>

  <fieldset>
    <legend>화면표시 조절</legend>
    <div class="field"><label for="move-step">이동/스텝:</label><input id="move-step" type="text" value="1"></div>
    <div class="field"><label for="move-refresh">이동/리프레시:</label><input id="move-refresh" type="text" value="1"></div>
    <div class="quality">
      <label for="quality">속도</label>
      <input id="quality" type="range" disabled>
      <span>화질</span>
    </div>
    <label class="check"><input type="checkbox" checked>각 가공경로 실행후 업데이트</label>
  </fieldset>

  <fieldset class="stops">
    <legend>정지 조건</legend>
    <label class="check"><input type="checkbox">공구충돌시 정지</label>
    <label class="check"><input type="checkbox">공구교체시 정지</label>
    <label class="check"><input type="checkbox">각 작업진행후 &nbsp;정지</label>
  </fieldset>

  <label class="check detail"><input type="checkbox">좌표,상세</label>

  <div class="row">
    <button type="button" class="btn btn-off" title="Stock"><svg><use href="#box"/></svg></button>
    <button type="button" class="btn" title="Section"><svg><use href="#cutter"/></svg></button>
    <button type="button" class="btn" title="Measure"><svg><use href="#ruler"/></svg></button>
    <button type="button" class="btn btn-off" title="Compare"><svg><use href="#cross"/></svg></button>
    <button type="button" class="btn" title="Save"><svg><use href="#disk"/></svg></button>
  </div>
  <div class="row row-speed">
    <button type="button" class="btn" title="Slow"><svg><use href="#walk"/></svg></button>
    <input type="range" value="100" aria-label="Speed">
    <button type="button" class="btn" title="Fast"><svg><use href="#run"/></svg></button>
  </div>

  <dl>
    <dt>작업 #:</dt><dd>4</dd>
    <dt>가공경로:</dt><dd>곡면정삭 평행가공</dd>
    <dt>공구#:</dt><dd>3</dd>
    <dt>공구 라벨:</dt><dd></dd>
  </dl>

  <output>100%</output>

  <footer>
    <button type="button" class="btn" title="OK"><svg><use href="#ok"/></svg></button>
    <button type="button" class="btn" title="Cancel"><svg><use href="#cancel"/></svg></button>
    <button type="button" class="btn" title="Help"><svg><use href="#help"/></svg></button>
  </footer>
</form>

</body>
</html>
```

FILE: styles.css
```css
* {
  box-sizing: border-box;
}

body {
  margin: 0;
  height: 100vh;
  display: flex;
  overflow: hidden;
  position: relative;
  font-family: "Liberation Sans", "Noto Sans CJK KR", sans-serif;
  font-size: 10px;
  color: #222;
  background: #b6c8e6;
}

button, input, select {
  font: inherit;
  color: inherit;
}

button {
  padding: 0;
  border: 0;
  background: none;
  display: flex;
  align-items: center;
  justify-content: center;
  flex: none;
}

svg {
  display: block;
  width: 14px;
  height: 14px;
}

.sprite {
  position: absolute;
  width: 0;
  height: 0;
}

/* main window */
.app {
  flex: 1;
  min-width: 0;
  display: flex;
  flex-direction: column;
  padding-bottom: 4px;
}

.bar {
  height: 23px;
  flex: none;
  display: grid;
  background: linear-gradient(#f0f1f5, #e3e5ec);
  border-bottom: 1px solid #c5c7ce;
  overflow: hidden;
}

.bar-top {
  height: 24px;
  padding-top: 2px;
  grid-template-columns: 115fr 46fr 203fr 79fr 51fr 93fr 92fr 75fr;
}

.bar-draw {
  grid-template-columns: 269fr 214fr 58fr 213fr;
}

.group {
  display: flex;
  align-items: center;
  justify-content: space-between;
  padding: 0 3px 0 8px;
  min-width: 0;
  border-left: 1px solid #c8cce0;
  background: repeating-linear-gradient(#b8bccc 0 1px, transparent 1px 4px) 2px 0 / 2px 100% no-repeat;
}

.group-start {
  justify-content: flex-start;
  gap: 3px;
}

.group button {
  width: 15px;
}

.fill {
  flex: 1;
}

.sep {
  width: 1px;
  height: 14px;
  background: #a8a8b0;
}

.group .more {
  width: 9px;
}

.more::before, .tri {
  content: "";
  border: 3px solid transparent;
  border-top: 4px solid #222;
  border-bottom: 0;
}

.more-off::before {
  border-top-color: #999;
}

.bar-input, .bar-ribbon {
  background: #eff7c0;
  border-bottom-color: #c0c6a0;
}

.bar-input {
  grid-template-columns: 340fr 173fr 241fr;
}

.bar-ribbon {
  display: flex;
  height: 24px;
  align-items: center;
  gap: 2px;
  padding: 0 23px 0 1px;
  border-bottom: 1px solid #777;
}

.bar-ribbon .sep {
  height: 100%;
  background: #d2d8b4;
}

.cell {
  display: flex;
  align-items: center;
  gap: 3px;
  padding: 0 8px 0 3px;
  min-width: 0;
  border-right: 1px solid #c6ccaa;
}

.cell-select {
  gap: 6px;
  padding-left: 8px;
}

.cell-tools {
  justify-content: space-between;
  padding: 0 0 0 1px;
  border: 0;
}

.key {
  width: 17px;
  height: 17px;
  border: 1px solid #9b9b9b;
  border-radius: 2px;
  background: linear-gradient(#f4f4f4, #d2d2d2);
}

.flat {
  width: 16px;
  height: 16px;
  background: #e9ebdc;
  box-shadow: 1px 1px #c4c8ae;
}

.dash {
  width: 4px;
  height: 1px;
  background: #aaa;
}

.coord {
  width: 90px;
  height: 16px;
  padding: 0;
  border: 1px solid #c8c8c8;
  background: #fff;
  font-size: 9px;
}

.drop {
  position: relative;
  display: flex;
  flex: 1;
  min-width: 0;
}

.drop select {
  appearance: none;
  width: 100%;
  height: 16px;
  padding: 0 4px;
  border: 1px solid #bbb;
  border-radius: 0;
  background: #f6f6f6;
}

.drop::after {
  content: "";
  position: absolute;
  right: 4px;
  top: 6px;
  border: 3px solid transparent;
  border-top: 4px solid #111;
  border-bottom: 0;
}

.drop-off select {
  background: #eef0e4;
}

.drop-off::after {
  border-top-color: #999;
}

.word {
  width: 35px;
  height: 16px;
  border: 1px solid #aaa;
  border-radius: 2px;
  background: #f4f4ec;
}

.word-off {
  color: #999;
}

/* middle area */
.main {
  flex: 1;
  min-height: 0;
  display: flex;
  position: relative;
}

.side {
  flex: none;
  background: #cdd3e8;
  border-right: 1px solid #a9adba;
}

.side button {
  width: 16px;
  height: 16px;
}

.side .more {
  width: 12px;
}

.side hr {
  height: 1px;
  margin: 4px 2px;
  border: 0;
  background: #a2a6b2;
}

.side-left {
  width: 33px;
  padding-top: 10px;
  background: linear-gradient(90deg, #eceef4 28px, #cdd3e8 28px) 0 0 / 100% 294px no-repeat, #cdd3e8;
}

.pair {
  display: flex;
  align-items: center;
  padding-left: 2px;
  height: 16px;
}

.side-right {
  width: 23px;
  border-left: 1px solid #ccc;
  border-right: 0;
}

.stack {
  width: 20px;
  padding: 7px 2px 0;
  background: #ececf0;
  border-bottom: 1px solid #b4b8c8;
}

.stack button {
  height: 17px;
}

.stack hr {
  margin: 2px 0;
}

.manager {
  width: 172px;
  flex: none;
  display: flex;
  flex-direction: column;
  background: #e8e8e8;
  border-right: 2px solid #888;
}

.manager h2 {
  margin: 0;
  padding-left: 3px;
  height: 14px;
  line-height: 13px;
  font-size: 10px;
  font-weight: normal;
  background: #adadad;
}

.tab {
  height: 18px;
  padding-left: 5px;
  line-height: 16px;
  background: #fff;
}

.manager-tool {
  height: 24px;
  padding: 5px 7px;
  border-bottom: 1px solid #b4b4b4;
}

.tree {
  flex: 1;
  display: flex;
  flex-direction: column;
  justify-content: space-between;
  margin: 3px;
  border: 1px solid #8a8a8a;
  background: #fff;
}

.node {
  width: 8px;
  height: 8px;
  margin: 3px 5px;
  border: 1px solid #888;
  line-height: 6px;
  font-size: 8px;
}

.hscroll {
  display: flex;
  align-items: center;
  gap: 5px;
  height: 13px;
  padding: 0 5px;
  background: #ececec;
}

.hscroll .thumb {
  width: 72px;
  height: 11px;
  border: 1px solid #999;
  background: linear-gradient(#eee, #c4c4c4);
  font-size: 6px;
  line-height: 9px;
  text-align: center;
}

.hscroll .left, .hscroll .right {
  border: 2px solid transparent;
  border-right: 3px solid #333;
  border-left: 0;
}

.hscroll .right {
  border-right: 0;
  border-left: 3px solid #333;
}

.view {
  flex: 1;
  min-width: 0;
  background: #000;
}

.view svg {
  width: 100%;
  height: 100%;
}

.mark {
  position: absolute;
  right: 10px;
  top: 189px;
  color: #929292;
}

/* status bar */
.status {
  flex: none;
  height: 21px;
  display: flex;
  align-items: center;
  gap: 4px;
  padding-right: 4px;
  background: #e9e9ea;
  border-top: 1px solid #bbb;
  white-space: nowrap;
}

.hint {
  width: 111px;
  padding-left: 1px;
  overflow: hidden;
}

.cap {
  min-width: 20px;
  height: 14px;
  border: 1px solid #b4b4b4;
  border-radius: 2px;
  background: #f1f1f1;
}

.cap-wide {
  width: 50px;
}

.cap-mid {
  width: 33px;
}

.cap-attr {
  width: 25px;
}

.cap-tiny, .cap-tri {
  min-width: 11px;
}

.cap-tri .tri {
  border-width: 7px 4px 0;
}

.depth {
  display: flex;
  align-items: center;
  gap: 4px;
  width: 74px;
  height: 16px;
  background: #fff;
}

.depth input {
  width: 60px;
  height: 14px;
  padding: 0 2px;
  border: 0;
  color: #e4f0ff;
  background: linear-gradient(#3c84dc, #3c84dc) 1px 1px / 15px 12px no-repeat, #e8fb74;
}

.colour {
  width: 30px;
  height: 14px;
  border: 1px solid #999;
  background: #f00000;
  color: #7c1010;
}

.status .drop select {
  border-color: #e0e0e0;
}

.point, .stroke {
  flex: none;
  width: 28px;
}

.stroke {
  width: 48px;
}

.status .thick {
  background: linear-gradient(#111, #111) 2px 6px / 28px 2px no-repeat, #f6f6f6;
}

.status .thin {
  background: linear-gradient(#333, #333) 2px 7px / 34px 1px no-repeat, #f6f6f6;
}

.size {
  width: 8px;
  height: 8px;
  background: radial-gradient(#aaa 1px, transparent 1px) 0 0 / 3px 3px;
}

/* window behind */
.behind {
  width: 19px;
  flex: none;
  display: flex;
  flex-direction: column;
  border-left: 5px solid #a9c7ee;
  box-shadow: inset 1px 0 #2c6488;
  background: #ececf2;
}

.behind-top {
  height: 29px;
  padding: 8px 4px;
  line-height: 14px;
  background: linear-gradient(#dce0ea, #cfd0d6);
}

.behind-gap {
  height: 86px;
}

.tabs {
  width: 10px;
  margin-left: 1px;
}

.tabs .blank {
  display: block;
  height: 40px;
  border: 1px solid #999;
  border-left: 0;
}

.tabs svg {
  width: 10px;
  height: 18px;
  background: #d4d4da;
  border-bottom: 1px solid #999;
}

.behind-body {
  flex: 1;
  width: 10px;
  border-right: 1px solid #888;
}

/* simulation dialog */
.dialog {
  position: absolute;
  left: 51px;
  top: 29px;
  width: 166px;
  padding: 0 8px 14px 11px;
  border: 1px solid #74889a;
  border-radius: 5px 5px 0 0;
  background: #e7e7e7;
  box-shadow: inset 0 0 0 1px #cfdae4, 1px 1px 2px #444;
}

.dialog header {
  display: flex;
  align-items: center;
  justify-content: space-between;
  height: 18px;
  margin: 0 -7px 8px -10px;
  padding: 0 2px 0 4px;
  border-radius: 4px 4px 0 0;
  background: linear-gradient(#b8c9dc, #d3dfec);
}

.dialog h1 {
  margin: 0;
  font-size: 10px;
  font-weight: normal;
  color: #44546a;
}

.close {
  width: 24px;
  height: 13px;
  border: 1px solid #8b9eb4;
  border-radius: 2px;
}

.close svg {
  width: 10px;
  height: 8px;
}

.row {
  display: flex;
  gap: 6px;
  padding-left: 3px;
}

.btn {
  width: 22px;
  height: 21px;
  border: 1px solid #7c7c7c;
  border-radius: 2px;
  background: linear-gradient(#f2f2f2, #d0d0d0);
}

.btn svg {
  width: 16px;
  height: 16px;
}

.btn-off {
  border-color: #b9b9b9;
  background: #e9e9e9;
}

.row-mode {
  gap: 4px;
  margin-top: 9px;
  padding-left: 31px;
}

.btn-mode {
  width: 24px;
  height: 24px;
}

.btn-mode svg {
  width: 22px;
  height: 22px;
}

.btn-on {
  border-color: #2c6c9c;
  background: linear-gradient(#d4ebfa 45%, #78b4e4);
}

.dialog fieldset {
  margin: 0;
  padding: 0 8px 6px 3px;
  border: 1px solid #d6d6d6;
  box-shadow: inset 0 1px #f4f4f4;
  min-width: 0;
}

.dialog legend {
  padding: 0 2px;
  line-height: 16px;
}

.field {
  display: flex;
  justify-content: space-between;
  align-items: center;
  height: 20px;
  padding-left: 13px;
}

.field input {
  width: 46px;
  height: 17px;
  padding: 0 2px;
  border: 1px solid #ddd;
  border-top-color: #999;
  background: #e8fb74;
}

.quality {
  display: flex;
  align-items: center;
  justify-content: space-between;
  height: 36px;
  padding: 0 12px 0 6px;
  color: #999;
}

input[type="range"] {
  appearance: none;
  width: 52px;
  height: 26px;
  margin: 0;
  background: linear-gradient(#aaa, #aaa) 0 50% / 100% 1px no-repeat;
}

.quality input[type="range"] {
  background: linear-gradient(#aaa, #aaa) 0 50% / 100% 1px no-repeat,
    repeating-linear-gradient(90deg, #aaa 0 1px, transparent 1px 10px) 5px 1px / 42px 2px no-repeat,
    repeating-linear-gradient(90deg, #aaa 0 1px, transparent 1px 10px) 5px 23px / 42px 2px no-repeat;
}

input[type="range"]::-webkit-slider-thumb {
  appearance: none;
  width: 8px;
  height: 16px;
  border: 1px solid #888;
  border-radius: 2px;
  background: #eee;
}

.check {
  display: flex;
  align-items: center;
  gap: 2px;
  height: 17px;
  white-space: nowrap;
}

.check input {
  appearance: none;
  width: 10px;
  height: 10px;
  margin: 0;
  border: 1px solid #999;
  background: #f0f0f0;
  position: relative;
}

.check input:checked::after {
  content: "";
  position: absolute;
  left: 3px;
  top: 0;
  width: 3px;
  height: 6px;
  border: solid #2c4c94;
  border-width: 0 2px 2px 0;
  transform: rotate(40deg);
}

.dialog .stops {
  margin-top: 3px;
}

.detail {
  margin: 4px 0 6px 4px;
}

.row-speed {
  justify-content: space-between;
  margin: 12px 8px 9px 0;
}

.row-speed input[type="range"] {
  width: 58px;
  height: 16px;
}

dl {
  display: grid;
  grid-template-columns: 51px 1fr;
  grid-auto-rows: 15px;
  margin: 0;
  padding: 1px 2px;
  border: 1px solid #d6d6d6;
  line-height: 15px;
  white-space: nowrap;
}

dd {
  margin: 0;
}

output {
  display: block;
  width: 34px;
  height: 18px;
  margin: 8px auto 8px 56px;
  padding-right: 2px;
  border: 1px solid #aaa;
  color: #888;
  line-height: 14px;
  text-align: right;
}

.dialog footer {
  display: flex;
  gap: 6px;
  padding-left: 6px;
}

.dialog footer .btn {
  width: 40px;
}
```
